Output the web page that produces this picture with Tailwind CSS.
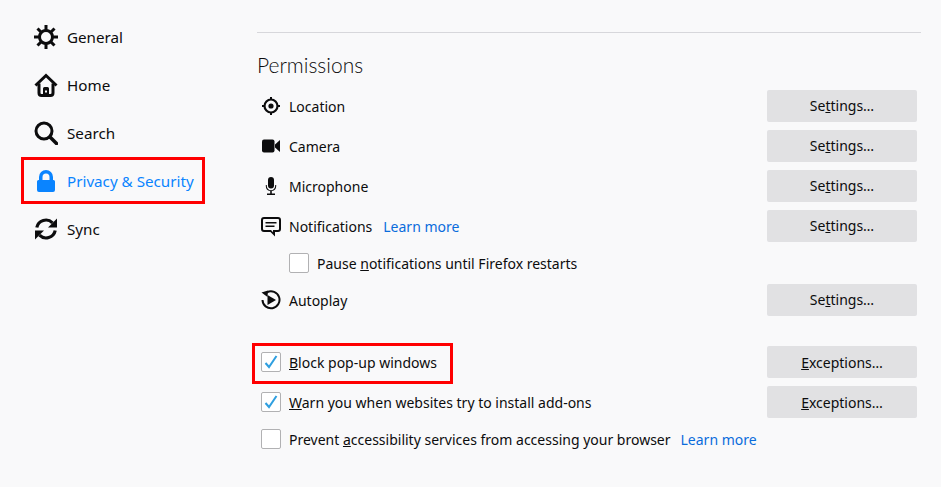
<!DOCTYPE html>
<html lang="en">
<head>
<meta charset="UTF-8">
<title>Options</title>
<script src="https://cdn.jsdelivr.net/npm/@tailwindcss/browser@4"></script>
</head>
<body class="h-[487px] w-[941px] overflow-hidden bg-[#f9f9fa] text-[#0c0c0d] font-['Noto_Sans','Open_Sans',sans-serif] text-[14px] leading-5">
<div class="flex h-full">
    <!-- sidebar -->
    <nav class="w-[257px] shrink-0 pt-[13px] pl-[34px] text-[15.2px]">
        <div class="flex h-12 items-center gap-[9px]">
            <svg class="h-6 w-6" viewBox="0 0 24 24" fill="none" stroke="#0c0c0d"><circle cx="12" cy="12" r="6.500" stroke-width="3"/><path d="M12 0v5M12 19v5M0 12h5M19 12h5M3.500 3.500l3.500 3.500M17 17l3.500 3.500M20.500 3.500L17 7M7 17l-3.500 3.500" stroke-width="3"/></svg>
            <span>General</span>
        </div>
        <div class="flex h-12 items-center gap-[9px]">
            <svg class="h-6 w-6" viewBox="0 0 24 24" fill="none" stroke="#0c0c0d" stroke-width="3"><path d="M1.500 12.500L12 2.500l10.500 10"/><path d="M5 10.500v9.500a2.500 2.500 0 0 0 2.500 2.500h9a2.500 2.500 0 0 0 2.500-2.500v-9.500"/><path d="M9 23v-7.500a1.500 1.500 0 0 1 1.500-1.500h3a1.500 1.500 0 0 1 1.500 1.500V23zM11 17.500v2h2v-2z" fill="#0c0c0d" fill-rule="evenodd" stroke="none"/></svg>
            <span>Home</span>
        </div>
        <div class="flex h-12 items-center gap-[9px]">
            <svg class="h-6 w-6" viewBox="0 0 24 24" fill="none" stroke="#0c0c0d"><circle cx="10" cy="10" r="8" stroke-width="3"/><path d="M16 16l6.500 6.500" stroke-width="3.500" stroke-linecap="round"/></svg>
            <span>Search</span>
        </div>
        <div class="-ml-[13px] flex h-[47px] w-[184px] items-center gap-[9px] border-3 border-[#ff0000] pl-[10px] text-[#0a84ff]">
            <svg class="h-6 w-6" viewBox="0 0 24 24" fill="#0a84ff" fill-rule="evenodd"><path d="M12 1a7 7 0 0 1 7 7v3h.500A1.500 1.500 0 0 1 21 12.500V21a2 2 0 0 1-2 2H5a2 2 0 0 1-2-2v-8.500A1.500 1.500 0 0 1 4.500 11H5V8a7 7 0 0 1 7-7zm0 3.500A3.500 3.500 0 0 0 8.500 8v3h7V8A3.500 3.500 0 0 0 12 4.500z"/></svg>
            <span>Privacy &amp; Security</span>
        </div>
        <div class="flex h-12 items-center gap-[9px] pt-[1px]">
            <svg class="h-6 w-6" viewBox="0 0 24 24" fill="none" stroke="#0c0c0d" stroke-width="3.200"><path d="M2.800 10.500A9.300 9.300 0 0 1 18.500 5.800"/><path d="M21.200 13.500A9.300 9.300 0 0 1 5.500 18.200"/><path d="M23 1.500v9h-9z" fill="#0c0c0d" stroke="none"/><path d="M1 22.500v-9h9z" fill="#0c0c0d" stroke="none"/></svg>
            <span>Sync</span>
        </div>
    </nav>

    <!-- main -->
    <main class="w-[664px] pt-[32px]">
        <div class="border-t border-[#d7d7db]"></div>
        <h1 class="mt-[19px] h-[26px] text-[21px] font-light leading-[26px] text-[#0c0c0d] font-['Lato','Noto_Sans',sans-serif]">Permissions</h1>

        <div class="mt-[12px] w-[660px]">
            <div class="flex h-8 items-center justify-between">
                <div class="flex items-center"><span class="flex w-[32px] justify-center pr-[4px]">
                    <svg class="h-[18px] w-[18px]" viewBox="0 0 18 18" fill="none" stroke="#0c0c0d"><circle cx="9" cy="9" r="6.500" stroke-width="2.200"/><circle cx="9" cy="9" r="2.600" fill="#0c0c0d" stroke="none"/><path d="M9 0v3M9 15v3M0 9h3M15 9h3" stroke-width="2"/></svg>
                </span><span class="pt-[2px]">Location</span></div>
                <button class="h-8 w-[150px] rounded-[2px] bg-[#e1e1e3] pb-[1px]">Se<u>t</u>tings…</button>
            </div>
            <div class="mt-2 flex h-8 items-center justify-between">
                <div class="flex items-center"><span class="flex w-[32px] justify-center pr-[4px]">
                    <svg class="h-[18px] w-[18px]" viewBox="0 0 18 18" fill="#0c0c0d"><rect x="0" y="2.500" width="12.500" height="13" rx="2"/><path d="M13 7.500L18 3v12l-5-4.500z"/></svg>
                </span><span class="pt-[2px]">Camera</span></div>
                <button class="h-8 w-[150px] rounded-[2px] bg-[#e1e1e3] pb-[1px]">Se<u>t</u>tings…</button>
            </div>
            <div class="mt-2 flex h-8 items-center justify-between">
                <div class="flex items-center"><span class="flex w-[32px] justify-center pr-[4px]">
                    <svg class="h-[18px] w-[18px]" viewBox="0 0 18 18" fill="#0c0c0d"><rect x="6" y="0" width="6" height="11.500" rx="3"/><path d="M3.800 8v1a5.200 5.200 0 0 0 4.400 5.100V16.500H5V18h8v-1.500H9.800V14.100A5.200 5.200 0 0 0 14.200 9V8h-1v1a4.200 4.200 0 0 1-8.400 0V8z"/></svg>
                </span><span class="pt-[2px]">Microphone</span></div>
                <button class="h-8 w-[150px] rounded-[2px] bg-[#e1e1e3] pb-[1px]">Se<u>t</u>tings…</button>
            </div>
            <div class="mt-2 flex h-8 items-center justify-between">
                <div class="flex items-center"><span class="flex w-[32px] justify-center pr-[4px] pt-[2px]">
                    <svg class="h-5 w-5" viewBox="0 0 20 20" fill="#0c0c0d" fill-rule="evenodd"><path d="M3 0h14a3 3 0 0 1 3 3v9a3 3 0 0 1-3 3h-3v4.500L9.500 15H3a3 3 0 0 1-3-3V3a3 3 0 0 1 3-3zm0 2a1 1 0 0 0-1 1v9a1 1 0 0 0 1 1h7l2 2.200V13h5a1 1 0 0 0 1-1V3a1 1 0 0 0-1-1zM4.500 5h11v1.500h-11zm0 3.500h9V10h-9z"/></svg>
                </span><span class="pt-[2px]">Notifications</span><a class="ml-[11px] pt-[2px] text-[#0a6cdc]">Learn more</a></div>
                <button class="h-8 w-[150px] rounded-[2px] bg-[#e1e1e3] pb-[1px]">Se<u>t</u>tings…</button>
            </div>
            <div class="mt-[11px] flex h-[20px] items-center pl-[32px]">
                <span class="h-5 w-5 rounded-[2px] border border-[#b1b1b3] bg-white"></span>
                <span class="ml-2 pt-[2px]">Pause <u>n</u>otifications until Firefox restarts</span>
            </div>
            <div class="mt-[11px] flex h-8 items-center justify-between">
                <div class="flex items-center"><span class="flex w-[32px] justify-center pr-[4px]">
                    <svg class="h-5 w-5" viewBox="0 0 20 20" fill="none" stroke="#0c0c0d" stroke-width="2"><path d="M6 2.300A8.500 8.500 0 1 1 1.500 10"/><path d="M.5 2.500L7 .5 6.500 7z" fill="#0c0c0d" stroke="none"/><path d="M6.500 5v10l8.500-5z" fill="#0c0c0d" stroke="none"/></svg>
                </span><span class="pt-[2px]">Autoplay</span></div>
                <button class="h-8 w-[150px] rounded-[2px] bg-[#e1e1e3] pb-[1px]">Se<u>t</u>tings…</button>
            </div>

            <div class="mt-[30px] flex h-8 items-center justify-between">
                <div class="-ml-[5px] -mt-[3px] flex h-[41px] w-[201px] items-center self-start border-3 border-[#ff0000] pb-[3px] pl-[6px]">
                    <span class="flex h-5 w-5 items-center justify-center rounded-[2px] border border-[#b1b1b3] bg-white">
                        <svg class="h-4 w-4" viewBox="0 0 16 16" fill="none" stroke="#2f9fe0" stroke-width="2"><path d="M2.500 9l3.500 4 7.500-11"/></svg>
                    </span>
                    <span class="ml-2 pt-[2px]"><u>B</u>lock pop-up windows</span>
                </div>
                <button class="h-8 w-[150px] rounded-[2px] bg-[#e1e1e3] pt-[2px]"><u>E</u>xceptions…</button>
            </div>
            <div class="mt-2 flex h-8 items-center justify-between">
                <div class="flex items-center pl-[4px]">
                    <span class="flex h-5 w-5 items-center justify-center rounded-[2px] border border-[#b1b1b3] bg-white">
                        <svg class="h-4 w-4" viewBox="0 0 16 16" fill="none" stroke="#2f9fe0" stroke-width="2"><path d="M2.500 9l3.500 4 7.500-11"/></svg>
                    </span>
                    <span class="ml-2 pt-[2px]"><u>W</u>arn you when websites try to install add-ons</span>
                </div>
                <button class="h-8 w-[150px] rounded-[2px] bg-[#e1e1e3] pt-[2px]"><u>E</u>xceptions…</button>
            </div>
            <div class="mt-[11px] flex h-5 items-center pl-[4px]">
                <span class="h-5 w-5 rounded-[2px] border border-[#b1b1b3] bg-white"></span>
                <span class="ml-2 pt-[2px]">Prevent <u>a</u>ccessibility services from accessing your browser</span>
                <a class="ml-[10px] pt-[2px] text-[#0a6cdc]">Learn more</a>
            </div>
        </div>
    </main>
</div>
</body>
</html>
